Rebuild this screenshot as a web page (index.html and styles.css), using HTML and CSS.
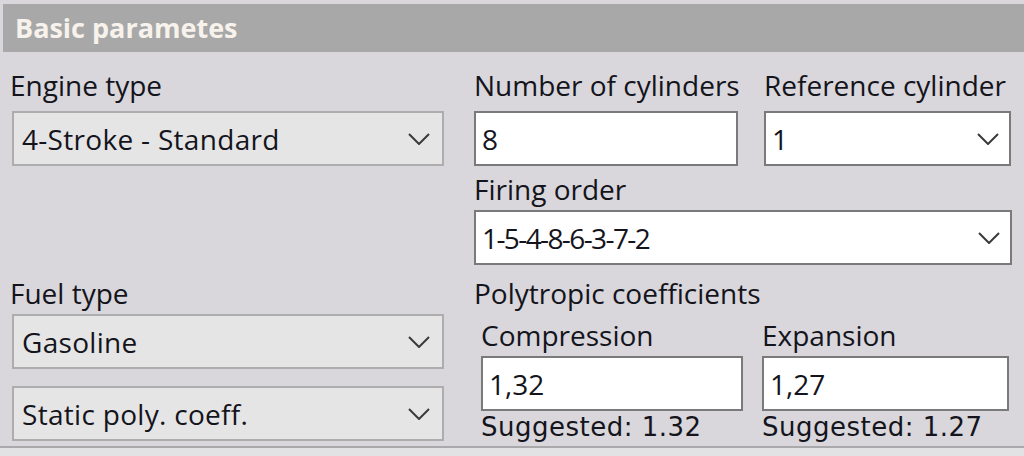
FILE: index.html
```html
<!DOCTYPE html>
<html>
<head>
<meta charset="utf-8">
<link rel="stylesheet" href="styles.css">
</head>
<body>
<div class="panel">
  <div class="header">Basic parametes</div>
  <div class="main">
    <div class="left">
      <div class="lbl lbl-top">Engine type</div>
      <div class="combo c1"><span>4-Stroke - Standard</span><svg class="chev" viewBox="0 0 22 12"><polyline points="1,1 11,11 21,1"/></svg></div>
      <div class="lbl lbl-fuel">Fuel type</div>
      <div class="combo c2"><span>Gasoline</span><svg class="chev" viewBox="0 0 22 12"><polyline points="1,1 11,11 21,1"/></svg></div>
      <div class="combo c3"><span>Static poly. coeff.</span><svg class="chev" viewBox="0 0 22 12"><polyline points="1,1 11,11 21,1"/></svg></div>
    </div>
    <div class="right">
      <div class="row">
        <div class="col col-a">
          <div class="lbl lbl-top">Number of cylinders</div>
          <div class="field"><span>8</span></div>
        </div>
        <div class="col col-b">
          <div class="lbl lbl-top">Reference cylinder</div>
          <div class="field dd"><span>1</span><svg class="chev" viewBox="0 0 22 12"><polyline points="1,1 11,11 21,1"/></svg></div>
        </div>
      </div>
      <div class="lbl lbl-fire">Firing order</div>
      <div class="field dd fire"><span class="seq">1-5-4-8-6-3-7-2</span><svg class="chev" viewBox="0 0 22 12"><polyline points="1,1 11,11 21,1"/></svg></div>
      <div class="lbl lbl-poly">Polytropic coefficients</div>
      <div class="row poly">
        <div class="col col-c">
          <div class="lbl lbl-sub">Compression</div>
          <div class="field"><span>1,32</span></div>
          <div class="sugg">Suggested: 1.32</div>
        </div>
        <div class="col col-d">
          <div class="lbl lbl-sub">Expansion</div>
          <div class="field"><span>1,27</span></div>
          <div class="sugg">Suggested: 1.27</div>
        </div>
      </div>
    </div>
  </div>
</div>
</body>
</html>
```

FILE: styles.css
```css
html, body {
  margin: 0;
  padding: 0;
}
body {
  width: 1024px;
  height: 456px;
  overflow: hidden;
  background: #e2e1e4;
  font-family: "Open Sans", "Noto Sans", sans-serif;
  color: #14141c;
}
.panel {
  height: 448px;
  box-sizing: border-box;
  padding-top: 4px;
  background: #d9d7db;
  border-bottom: 2px solid #a9a8ab;
}
.header {
  margin-left: 3px;
  height: 48px;
  background: #a8a8a8;
  color: #f7f3ec;
  font-weight: bold;
  font-size: 27px;
  line-height: 48px;
  padding-left: 12px;
}
.main {
  display: flex;
  padding-left: 12px;
  gap: 30px;
}
.left {
  width: 432px;
  display: flex;
  flex-direction: column;
}
.right {
  width: 538px;
  display: flex;
  flex-direction: column;
}
.lbl {
  font-size: 28px;
  height: 32px;
  line-height: 32px;
  white-space: nowrap;
}
.left .lbl { margin-left: -2px; }
.lbl-top { margin-top: 17px; }
.lbl-fuel { margin-top: 111px; }
.lbl-fire { margin-top: 7px; }
.lbl-poly { margin-top: 12px; }
.lbl-sub { margin-top: 10px; }
.combo, .field {
  box-sizing: border-box;
  height: 55px;
  display: flex;
  align-items: center;
  justify-content: space-between;
  font-size: 28px;
}
.combo {
  background: #e5e5e5;
  border: 2px solid #adadad;
  padding: 0 12px 0 8px;
}
.combo span { letter-spacing: 0.3px; }
.field {
  background: #ffffff;
  border: 2px solid #7a7a7a;
  padding: 0 10px 0 6px;
}
.seq { letter-spacing: -1.6px; }
.c1 { margin-top: 10px; }
.c2 { margin-top: 5px; }
.c3 { margin-top: 17px; }
.row {
  display: flex;
}
.col {
  display: flex;
  flex-direction: column;
}
.col-a { width: 264px; }
.col-b { width: 247px; margin-left: 26px; }
.col-a .field, .col-b .field { margin-top: 10px; }
.fire { margin-top: 5px; }
.poly { padding-left: 7px; }
.col-c { width: 262px; }
.col-d { width: 247px; margin-left: 19px; }
.col-c .field, .col-d .field { margin-top: 5px; }
.sugg {
  font-family: "DejaVu Sans", Verdana, sans-serif;
  font-size: 26px;
  line-height: 28px;
  margin-top: 2px;
  letter-spacing: 0.5px;
  white-space: nowrap;
}
.chev {
  width: 22px;
  height: 12px;
  fill: none;
  stroke: #3a3a3a;
  stroke-width: 2;
}
```
